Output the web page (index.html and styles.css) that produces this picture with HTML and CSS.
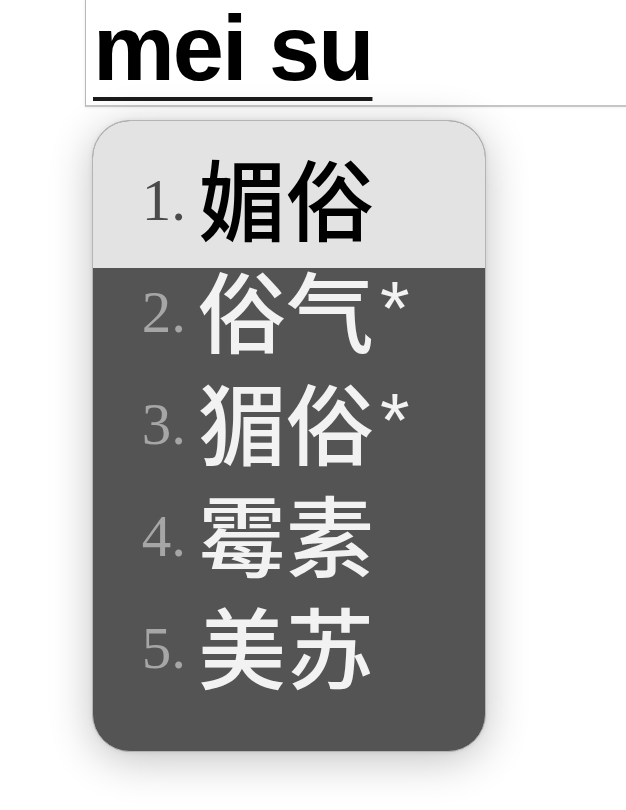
FILE: index.html
```html
<!DOCTYPE html>
<html lang="zh-CN">
<head>
<meta charset="utf-8">
<title>mei su</title>
<link rel="stylesheet" href="styles.css">
</head>
<body>
<div class="field"><span class="composing">mei su</span></div>
<ol class="candidates">
  <li class="row active"><span class="num">1.</span><span class="word">媚俗</span></li>
  <li class="row"><span class="num">2.</span><span class="word">俗气<span class="mark">*</span></span></li>
  <li class="row"><span class="num">3.</span><span class="word">猸俗<span class="mark">*</span></span></li>
  <li class="row"><span class="num">4.</span><span class="word">霉素</span></li>
  <li class="row"><span class="num">5.</span><span class="word">美苏</span></li>
</ol>
</body>
</html>
```
FILE: styles.css
```css
html, body {
  margin: 0;
  padding: 0;
  background: #ffffff;
  overflow: hidden;
}
body {
  width: 626px;
  height: 810px;
}
.field {
  margin-left: 85px;
  height: 105px;
  padding-left: 7px;
  background: #ffffff;
  border-left: 1px solid #b8b8b8;
  border-bottom: 2px solid #c6c6c6;
  box-shadow: 0 0 3px rgba(0, 0, 0, 0.1);
}
.composing {
  display: inline-block;
  font-family: "Liberation Sans", Arial, sans-serif;
  font-weight: bold;
  font-size: 92px;
  line-height: 96px;
  letter-spacing: -2px;
  color: #000;
  text-decoration: underline;
  text-decoration-thickness: 4px;
  text-underline-offset: 17px;
  text-decoration-color: #1a1a1a;
}
.candidates {
  list-style: none;
  margin: 13px 0 0 92px;
  padding: 0 0 35px 0;
  width: 392px;
  background: #545454;
  border: 1px solid #b4b4b4;
  border-radius: 38px;
  overflow: hidden;
  box-shadow: 0 8px 44px rgba(0, 0, 0, 0.24), 0 0 5px rgba(0, 0, 0, 0.08);
}
.row {
  display: flex;
  align-items: flex-start;
  height: 112px;
  padding-left: 43px;
  color: #f2f2f2;
}
.row.active {
  padding-top: 35px;
  background: #e3e3e3;
  color: #000;
}
.num {
  width: 50px;
  text-align: right;
  font-family: "Liberation Serif", "Times New Roman", serif;
  font-size: 59px;
  line-height: 89px;
  color: #a6a6a6;
}
.row.active .num {
  color: #4a4a4a;
}
.word {
  margin-left: 12px;
  font-family: "Noto Sans CJK SC", sans-serif;
  font-weight: 500;
  font-size: 88px;
  line-height: 80px;
  white-space: nowrap;
}
.mark {
  font-family: "Liberation Sans", Arial, sans-serif;
  font-size: 76px;
  margin-left: 6px;
  vertical-align: 12px;
}
```
